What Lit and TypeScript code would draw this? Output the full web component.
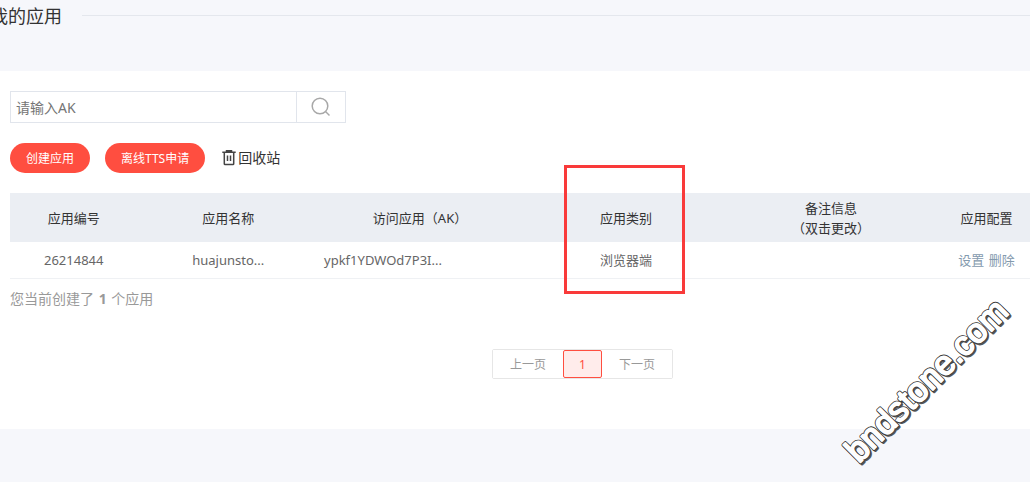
import { LitElement, html, css } from "lit";
import { customElement, state } from "lit/decorators.js";

interface AppRecord {
  id: string;
  name: string;
  ak: string;
  kind: string;
  note: string;
}

@customElement("app-watermark")
class AppWatermark extends LitElement {
  static styles = css`
    :host { display: block; opacity: 0.99; }
    svg { display: block; }
    text {
      font-family: "Liberation Sans", Arial, sans-serif;
      font-size: 34px;
      stroke-linejoin: round;
    }
    .shade { fill: #555; stroke: #555; stroke-width: 3px; }
    .edge { fill: #333; stroke: #333; stroke-width: 3.4px; }
    .face { fill: #fff; stroke: #fff; stroke-width: 1.8px; }
  `;
  render() {
    return html`
      <svg width="200" height="200" viewBox="0 0 200 200" role="img" aria-label="bndstone.com">
        <g transform="translate(29 184) rotate(-45)">
          <text class="shade" x="0" y="2" aria-hidden="true">bndstone.com</text>
          <text class="edge" x="0" y="0" aria-hidden="true">bndstone.com</text>
          <text class="face" x="0" y="0">bndstone.com</text>
        </g>
      </svg>
    `;
  }
}

@customElement("app-root")
class AppRoot extends LitElement {
  @state() private records: AppRecord[] = [
    { id: "26214844", name: "huajunsto...", ak: "ypkf1YDWOd7P3I...", kind: "浏览器端", note: "" },
  ];

  static styles = css`
    :host {
      display: block;
      position: relative;
      overflow: hidden;
      min-height: 100vh;
      background: #f6f7fb;
      color: #333;
      font-family: "Noto Sans", "Noto Sans CJK SC", sans-serif;
      font-size: 14px;
      line-height: 20px;
    }
    * { box-sizing: border-box; }
    button, input { font: inherit; margin: 0; }
    button { cursor: pointer; }
    a { text-decoration: none; }
    .heading {
      display: flex;
      align-items: center;
      gap: 20px;
      height: 71px;
      padding-bottom: 40px;
      margin-left: -10px;
    }
    h1 { margin: 0; font-size: 18px; font-weight: 400; line-height: 24px; white-space: nowrap; }
    .rule { flex: 1; height: 1px; background: #e4e7ed; }
    .panel { background: #fff; padding: 20px 0 50px 10px; }
    .search { display: flex; width: 336px; height: 32px; border: 1px solid #e1e5ec; }
    .search input {
      flex: 1;
      min-width: 0;
      border: 0;
      padding: 2px 5px 0;
      background: #fff;
      color: #333;
      outline: none;
    }
    .search input::placeholder { color: #757575; opacity: 1; }
    .search button {
      display: flex;
      align-items: center;
      justify-content: center;
      width: 49px;
      border: 0;
      border-left: 1px solid #e1e5ec;
      background: #fff;
      padding: 0;
    }
    .actions { display: flex; align-items: center; gap: 15px; margin: 20px 0; }
    .pill {
      height: 30px;
      min-width: 80px;
      padding: 2px 16px 0;
      border: 0;
      border-radius: 15px;
      background: #ff4e40;
      color: #fff;
      font-size: 12px;
    }
    .recycle { display: flex; align-items: center; gap: 2px; padding-left: 2px; color: #333; }
    table {
      width: 100%;
      table-layout: fixed;
      border-collapse: separate;
      border-spacing: 0;
      font-size: 13px;
      text-align: center;
    }
    .c-id { width: 12.5%; }
    .c-name { width: 17.8%; }
    .c-ak { width: 19.8%; }
    .c-kind { width: 20.6%; }
    .c-note { width: 19.6%; }
    th { height: 49px; padding: 4px 0; background: #ebeef3; font-weight: 400; }
    td { height: 37px; padding: 0; border-bottom: 1px solid #eff1f4; color: #666; }
    .left { text-align: left; padding-left: 5px; }
    th.last, td.last { padding-left: 12px; white-space: nowrap; }
    td.last a { color: #849aae; }
    td.last a + a { margin-left: 1px; }
    .marked { position: relative; }
    .frame {
      position: absolute;
      top: -28px;
      left: calc(50% - 62px);
      width: 121px;
      height: 129px;
      border: 3px solid #f93a3a;
      pointer-events: none;
    }
    .total { margin: 10px 0 40px; color: #999; }
    .total b { margin: 0 1px; }
    .pages { display: flex; justify-content: center; padding-left: 125px; }
    .pager {
      display: flex;
      height: 30px;
      border: 1px solid #e6e6e6;
      border-radius: 2px;
    }
    .pager button {
      border: 0;
      padding: 2px 0 0;
      width: 70px;
      background: #fff;
      color: #999;
      font-size: 12px;
    }
    .pager .current {
      width: 39px;
      border: 1px solid #ff4e40;
      border-radius: 2px;
      background: #ffeceb;
      color: #ff4e40;
    }
    .mark { position: absolute; right: 0; top: 280px; pointer-events: none; }
  `;

  render() {
    return html`
      <header class="heading">
        <h1>我的应用</h1>
        <div class="rule"></div>
      </header>
      <main class="panel">
        <form class="search" @submit=${(e: Event) => e.preventDefault()}>
          <input type="text" placeholder="请输入AK" aria-label="请输入AK" />
          <button type="submit" aria-label="搜索">
            <svg width="20" height="20" viewBox="0 0 20 20" fill="none" stroke="#a8a8a8" stroke-width="1.5">
              <circle cx="9" cy="9" r="7.8" />
              <path d="M14.5 14.5 L18.5 18.5" />
            </svg>
          </button>
        </form>
        <div class="actions">
          <button class="pill" type="button">创建应用</button>
          <button class="pill" type="button">离线TTS申请</button>
          <a class="recycle" href="#">
            <svg width="14" height="16" viewBox="0 0 14 16" fill="none" stroke="#444" stroke-width="1.5">
              <path d="M0.3 2.2 H13.7 M4.5 2 V0.7 H9.5 V2" />
              <path d="M2.3 2.5 V13.7 Q2.3 14.5 3.1 14.5 H10.9 Q11.7 14.5 11.7 13.7 V2.5" />
              <path d="M5.5 5.5 V11 M8.5 5.5 V11" />
            </svg>
            <span>回收站</span>
          </a>
        </div>
        <table>
          <colgroup>
            <col class="c-id" /><col class="c-name" /><col class="c-ak" />
            <col class="c-kind" /><col class="c-note" /><col />
          </colgroup>
          <thead>
            <tr>
              <th>应用编号</th>
              <th>应用名称</th>
              <th>访问应用（AK）</th>
              <th class="marked">应用类别<div class="frame"></div></th>
              <th>备注信息<br />（双击更改）</th>
              <th class="last">应用配置</th>
            </tr>
          </thead>
          <tbody>
            ${this.records.map((r) => html`
              <tr>
                <td>${r.id}</td>
                <td>${r.name}</td>
                <td class="left">${r.ak}</td>
                <td>${r.kind}</td>
                <td>${r.note}</td>
                <td class="last"><a href="#">设置</a> <a href="#">删除</a></td>
              </tr>
            `)}
          </tbody>
        </table>
        <p class="total">您当前创建了 <b>${this.records.length}</b> 个应用</p>
        <nav class="pages" aria-label="分页">
          <div class="pager">
            <button type="button">上一页</button>
            <button type="button" class="current" aria-current="page">1</button>
            <button type="button">下一页</button>
          </div>
        </nav>
      </main>
      <app-watermark class="mark"></app-watermark>
    `;
  }
}
